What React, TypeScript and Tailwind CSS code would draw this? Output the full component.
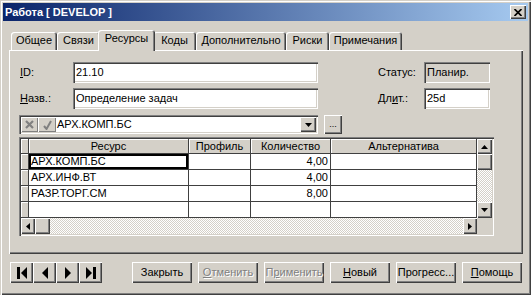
import React from "react";

const raised = "shadow-[inset_1px_1px_#ffffff,inset_-1px_-1px_#404040,inset_-2px_-2px_#808080]";
const sunken = "shadow-[inset_1px_1px_#808080,inset_2px_2px_#404040,inset_-1px_-1px_#ffffff,inset_-2px_-2px_#d4d0c8]";
const dither = "bg-[repeating-conic-gradient(#ffffff_0_25%,#d4d0c8_0_50%)] bg-[length:2px_2px]";

function Arrow({ dir }: { dir: "up" | "down" | "left" | "right" }) {
  const vertical = dir === "up" || dir === "down";
  const w = vertical ? 7 : 4;
  const h = vertical ? 4 : 7;
  const pts =
    dir === "up"
      ? "3.5,0 7,4 0,4"
      : dir === "down"
      ? "0,0 7,0 3.5,4"
      : dir === "left"
      ? "4,0 4,7 0,3.5"
      : "0,0 4,3.5 0,7";
  return (
    <svg width={w} height={h} viewBox={`0 0 ${w} ${h}`}>
      <polygon points={pts} fill="#000" />
    </svg>
  );
}

function NavIcon({ kind }: { kind: "first" | "prev" | "next" | "last" }) {
  return (
    <svg width="10" height="12" viewBox="0 0 10 12">
      {kind === "first" && (
        <>
          <rect x="0" y="0" width="3" height="12" fill="#000" />
          <polygon points="10,0 10,12 4,6" fill="#000" />
        </>
      )}
      {kind === "prev" && <polygon points="8,0 8,12 2,6" fill="#000" />}
      {kind === "next" && <polygon points="2,0 2,12 8,6" fill="#000" />}
      {kind === "last" && (
        <>
          <polygon points="0,0 0,12 6,6" fill="#000" />
          <rect x="7" y="0" width="3" height="12" fill="#000" />
        </>
      )}
    </svg>
  );
}

function Tab({ label, w, active }: { label: string; w: string; active?: boolean }) {
  if (active) {
    return (
      <div
        className={`relative z-10 -mx-[2px] -mb-px flex h-[21px] w-[57px] items-start justify-center rounded-t-[3px] bg-[#d4d0c8] pt-[3px] shadow-[inset_1px_1px_#ffffff,inset_-1px_0_#404040,inset_-2px_0_#808080]`}
      >
        {label}
      </div>
    );
  }
  return (
    <div
      className={`flex h-[18px] ${w} items-start justify-center rounded-t-[3px] bg-[#d4d0c8] pt-[3px] shadow-[inset_1px_1px_#ffffff,inset_-1px_0_#404040,inset_-2px_0_#808080]`}
    >
      {label}
    </div>
  );
}

function Btn({
  children,
  disabled,
}: {
  children: React.ReactNode;
  disabled?: boolean;
}) {
  return (
    <div
      className={`flex h-[21px] w-[60px] items-center justify-center bg-[#d4d0c8] ${raised} ${
        disabled ? "text-[#808080] [text-shadow:1px_1px_#ffffff]" : "text-black"
      }`}
    >
      {children}
    </div>
  );
}

const rows = [
  { res: "АРХ.КОМП.БС", qty: "4,00" },
  { res: "АРХ.ИНФ.ВТ", qty: "4,00" },
  { res: "РАЗР.ТОРГ.СМ", qty: "8,00" },
  { res: "", qty: "" },
];

export default function App() {
  return (
    <div
      className={`flex h-[295px] w-[531px] flex-col bg-[#d4d0c8] p-[3px] font-['Liberation_Sans',Arial,sans-serif] text-[11px] leading-none text-black shadow-[inset_1px_1px_#d4d0c8,inset_2px_2px_#ffffff,inset_-1px_-1px_#404040,inset_-2px_-2px_#808080]`}
    >
      {/* Title bar */}
      <div className="flex h-[18px] items-center justify-between bg-[linear-gradient(to_right,#0a246a,#a6caf0)] pl-[2px] pr-[2px]">
        <span className="text-[11px] font-bold text-white">Работа [ DEVELOP ]</span>
        <div className={`flex h-[14px] w-[16px] items-center justify-center bg-[#d4d0c8] ${raised}`}>
          <svg width="8" height="7" viewBox="0 0 8 7">
            <path d="M0.5 0 L7.5 7 M7.5 0 L0.5 7" stroke="#000" strokeWidth="1.7" />
          </svg>
        </div>
      </div>

      {/* Body */}
      <div className="flex flex-1 flex-col pl-[6px] pr-[5px] pt-[9px]">
        {/* Tabs */}
        <div className="flex h-[20px] items-end pl-[2px]">
          <Tab label="Общее" w="w-[46px]" />
          <Tab label="Связи" w="w-[43px]" />
          <Tab label="Ресурсы" w="w-[53px]" active />
          <Tab label="Коды" w="w-[43px]" />
          <Tab label="Дополнительно" w="w-[90px]" />
          <Tab label="Риски" w="w-[43px]" />
          <Tab label="Примечания" w="w-[73px]" />
        </div>

        {/* Panel */}
        <div className="flex h-[204px] flex-col bg-[#d4d0c8] pl-[10px] pt-[12px] shadow-[inset_1px_1px_#ffffff,inset_-1px_-1px_#404040,inset_-2px_-2px_#808080]">
          {/* Row 1 */}
          <div className="flex h-[21px] items-center">
            <div className="w-[54px] pl-[1px]">
              <span className="underline">I</span>D:
            </div>
            <div className={`flex h-[21px] w-[245px] items-center bg-white pl-[3px] ${sunken}`}>21.10</div>
            <div className="ml-[60px] w-[46px]">Статус:</div>
            <div className={`flex h-[21px] w-[66px] items-center bg-[#d4d0c8] pl-[3px] ${sunken}`}>Планир.</div>
          </div>
          {/* Row 2 */}
          <div className="mt-[5px] flex h-[21px] items-center">
            <div className="w-[54px] pl-[1px]">
              <span className="underline">Н</span>азв.:
            </div>
            <div className={`flex h-[21px] w-[245px] items-center bg-white pl-[3px] ${sunken}`}>
              Определение задач
            </div>
            <div className="ml-[60px] w-[46px]">
              Дл<span className="underline">и</span>т.:
            </div>
            <div className={`flex h-[21px] w-[66px] items-center bg-white pl-[3px] ${sunken}`}>25d</div>
          </div>

          {/* Combo row */}
          <div className="mt-[6px] flex h-[19px] items-center">
            <div className={`flex h-[19px] w-[299px] items-stretch bg-white p-[2px] ${sunken}`}>
              <div className="flex w-[17px] items-center justify-center bg-[#d4d0c8] shadow-[inset_1px_1px_#ffffff,inset_-1px_-1px_#808080]">
                <svg width="9" height="9" viewBox="0 0 9 9">
                  <path d="M1 1 L8 8 M8 1 L1 8" stroke="#808080" strokeWidth="2.2" />
                </svg>
              </div>
              <div className="flex w-[18px] items-center justify-center bg-[#d4d0c8] shadow-[inset_1px_1px_#ffffff,inset_-1px_-1px_#808080]">
                <svg width="9" height="10" viewBox="0 0 9 10">
                  <path d="M1 6 L3.5 9 L8 1" stroke="#808080" strokeWidth="2" fill="none" />
                </svg>
              </div>
              <div className="flex flex-1 items-center pl-[1px]">АРХ.КОМП.БС</div>
              <div className={`flex w-[16px] items-center justify-center bg-[#d4d0c8] ${raised}`}>
                <Arrow dir="down" />
              </div>
            </div>
            <div className={`ml-[6px] flex h-[19px] w-[18px] items-end justify-center bg-[#d4d0c8] pb-[5px] text-[9px] ${raised}`}>
              ...
            </div>
          </div>

          {/* Grid */}
          <div className={`mt-[3px] flex h-[99px] w-[475px] flex-col bg-white p-[2px] ${sunken}`}>
            <div className="flex h-[79px]">
              <div className="flex w-[456px] flex-col">
                {/* Header */}
                <div className="flex h-[15px]">
                  <div className="w-[8px] border-b border-r border-[#404040] bg-[#d4d0c8] shadow-[inset_1px_1px_#ffffff]" />
                  <div className="flex w-[160px] items-center justify-center border-b border-r border-[#404040] bg-[#d4d0c8] shadow-[inset_1px_1px_#ffffff]">
                    Ресурс
                  </div>
                  <div className="flex w-[62px] items-center justify-center border-b border-r border-[#404040] bg-[#d4d0c8] shadow-[inset_1px_1px_#ffffff]">
                    Профиль
                  </div>
                  <div className="flex w-[80px] items-center justify-center border-b border-r border-[#404040] bg-[#d4d0c8] shadow-[inset_1px_1px_#ffffff]">
                    Количество
                  </div>
                  <div className="flex w-[146px] items-center justify-center border-b border-r border-[#404040] bg-[#d4d0c8] shadow-[inset_1px_1px_#ffffff]">
                    Альтернатива
                  </div>
                </div>
                {rows.map((r, i) => (
                  <div key={i} className="flex h-[16px]">
                    <div className="w-[8px] border-b border-r border-[#404040] bg-[#d4d0c8] shadow-[inset_1px_1px_#ffffff]" />
                    <div
                      className={`flex w-[160px] items-center border-b border-r border-[#404040] pl-[2px] ${
                        i === 0 ? "shadow-[inset_0_0_0_2px_#000000]" : ""
                      }`}
                    >
                      {r.res}
                    </div>
                    <div className="w-[62px] border-b border-r border-[#404040]" />
                    <div className="flex w-[80px] items-center justify-end border-b border-r border-[#404040] pr-[2px]">
                      {r.qty}
                    </div>
                    <div className="w-[146px] border-b border-r border-[#404040]" />
                  </div>
                ))}
              </div>
              {/* Vertical scrollbar */}
              <div className="flex w-[15px] flex-col">
                <div className={`flex h-[15px] items-center justify-center bg-[#d4d0c8] ${raised}`}>
                  <Arrow dir="up" />
                </div>
                <div className={`h-[16px] bg-[#d4d0c8] ${raised}`} />
                <div className={`flex-1 ${dither}`} />
                <div className={`flex h-[16px] items-center justify-center bg-[#d4d0c8] ${raised}`}>
                  <Arrow dir="down" />
                </div>
              </div>
            </div>
            {/* Horizontal scrollbar */}
            <div className="flex h-[16px]">
              <div className="flex w-[456px]">
                <div className={`flex w-[14px] items-center justify-center bg-[#d4d0c8] ${raised}`}>
                  <Arrow dir="left" />
                </div>
                <div className={`w-[15px] bg-[#d4d0c8] ${raised}`} />
                <div className={`flex-1 ${dither}`} />
                <div className={`flex w-[14px] items-center justify-center bg-[#d4d0c8] ${raised}`}>
                  <Arrow dir="right" />
                </div>
              </div>
              <div className="w-[15px] bg-[#d4d0c8]" />
            </div>
          </div>
        </div>

        {/* Bottom buttons */}
        <div className="mt-[8px] flex items-center pl-[1px]">
          <div className="flex">
            {(["first", "prev", "next", "last"] as const).map((k) => (
              <div key={k} className={`flex h-[21px] w-[23px] items-center justify-center bg-[#d4d0c8] ${raised}`}>
                <NavIcon kind={k} />
              </div>
            ))}
          </div>
          <div className="ml-[30px] flex gap-[6px]">
            <Btn>Закрыть</Btn>
            <Btn disabled>
              <span className="underline">О</span>тменить
            </Btn>
            <Btn disabled>
              П<span className="underline">р</span>именить
            </Btn>
            <Btn>
              <span className="underline">Н</span>овый
            </Btn>
            <Btn>Прогресс...</Btn>
            <Btn>
              <span className="underline">П</span>омощь
            </Btn>
          </div>
        </div>
      </div>
    </div>
  );
}
